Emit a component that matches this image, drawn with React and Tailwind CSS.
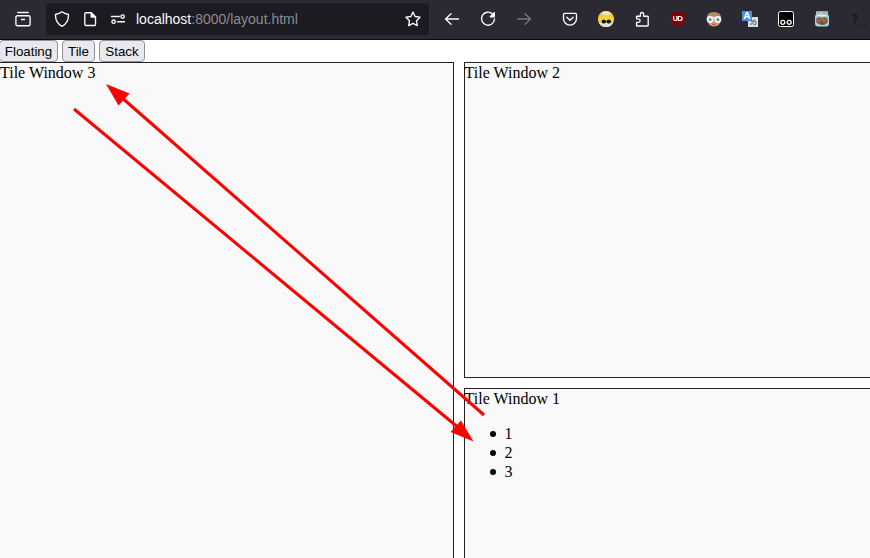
function Icon({ children, className = "", size = 16 }) {
  return (
    <svg
      width={size}
      height={size}
      viewBox="0 0 16 16"
      fill="none"
      stroke="currentColor"
      strokeWidth="1.35"
      strokeLinecap="round"
      strokeLinejoin="round"
      className={`shrink-0 ${className}`}
    >
      {children}
    </svg>
  );
}

function AddressBar() {
  return (
    <div className="ml-[15px] flex h-8 w-[383px] items-center rounded bg-[#1c1b22] pl-2 pr-2">
      <Icon>
        <path d="M8 .8C6 2.3 3.8 3 1.500 3.500c-.2 5 1.700 9.300 6.500 11.800 4.800-2.500 6.700-6.800 6.500-11.800C12.200 3 10 2.300 8 .8Z" />
      </Icon>
      <Icon className="ml-3">
        <path d="M4 1.700h5.300l4.200 4.200v7.400a1.200 1.200 0 0 1-1.200 1.200H4a1.200 1.200 0 0 1-1.200-1.200V2.900A1.200 1.200 0 0 1 4 1.700Z" />
        <path d="M9.200 2v4h4Z" fill="currentColor" />
      </Icon>
      <Icon className="ml-3">
        <path d="M1.500 5.500h7.800M7.500 10.700h7" />
        <circle cx="12.600" cy="5.500" r="1.700" />
        <circle cx="3.600" cy="10.700" r="1.700" />
      </Icon>
      <span className="ml-[10px] font-['Liberation_Sans',sans-serif] text-[14px] leading-5 text-[#8d8c93]">
        <span className="text-[#fbfbfe]">localhost</span>:8000/layout.html
      </span>
      <Icon className="ml-auto">
        <path d="m8 1 2.100 4.500 4.900.7-3.500 3.500.8 4.900L8 12.300l-4.300 2.300.8-4.900L1 6.200l4.900-.7Z" />
      </Icon>
    </div>
  );
}

function Extensions() {
  return (
    <div className="ml-[30px] flex items-center gap-5">
      <Icon>
        <path d="M2.700 2.400h10.600a1.200 1.200 0 0 1 1.200 1.200v4a6.500 6.500 0 0 1-13 0v-4a1.200 1.200 0 0 1 1.200-1.200Z" />
        <path d="m4.800 6.300 3.200 3 3.200-3" />
      </Icon>
      <svg width="16" height="16" viewBox="0 0 16 16">
        <circle cx="8" cy="8" r="8" fill="#f3cf2e" />
        <path d="M3.500 1.500Q8-1.200 12.500 1.500L11 4H5Z" fill="#e8e5de" />
        <path d="M.5 10.500q1.500 5.500 7.500 5.500t7.500-5.500L12 12H4Z" fill="#e6e0d4" />
        <path d="M0 7q8-4 16 0l-1 4-2-2H3l-2 2Z" fill="#f7d52b" />
        <rect x="3" y="8" width="10" height="4" rx="2" fill="#f4e5a0" />
        <ellipse cx="5.800" cy="10.500" rx="2.200" ry="1.900" fill="#080808" />
        <ellipse cx="10.700" cy="10.500" rx="2.300" ry="1.900" fill="#080808" />
      </svg>
      <Icon>
        <path d="M2.600 15v-3.700h1.800a1.700 1.700 0 0 0 0-3.400H2.600V5.200h3.800V3.100a1.600 1.600 0 0 1 3.200 0v2.100h3.800a.8.8 0 0 1 .8.8v8.200a.8.8 0 0 1-.8.8Z" />
      </Icon>
      <svg width="16" height="16" viewBox="0 0 16 16">
        <path
          d="M8 .4Q5 1.900.9 2.100v6.400Q1.200 13 8 15.800q6.800-2.800 7.100-7.300V2.100Q11 1.900 8 .4Z"
          fill="#800000"
          stroke="#611923"
          strokeWidth=".6"
        />
        <path
          d="M3.700 5v3q0 1.500 1.600 1.500T6.900 8V5M8.400 5.500h1.400q2.300 0 2.300 2t-2.300 2H8.400Z"
          fill="none"
          stroke="#fff"
          strokeWidth="1.200"
        />
      </svg>
      <svg width="16" height="16" viewBox="0 0 16 16">
        <circle cx="8" cy="8.500" r="7" fill="#df9b79" />
        <path d="M.8 7Q1 .9 8 1t7.200 6L12 5.800 9 4.600 4 6Z" fill="#b08a60" />
        <path d="M1 7h14" stroke="#d5e5e6" strokeWidth="1.300" />
        <circle cx="4.100" cy="8.500" r="2.500" fill="#5b93a1" stroke="#edf4f2" strokeWidth="1.900" />
        <circle cx="11.900" cy="8.500" r="2.500" fill="#5b93a1" stroke="#edf4f2" strokeWidth="1.900" />
        <path d="M6 13q2 1 4 0" stroke="#b7503e" fill="none" />
      </svg>
      <svg width="16" height="16" viewBox="0 0 16 16">
        <rect x="6" y="6" width="10" height="10" fill="#dce0e2" />
        <path d="M8 13.500q4-1 4.500-5M9 10.500q5-2 5 1t-2.500 2" stroke="#607783" fill="none" strokeWidth="1.200" />
        <rect width="10" height="10" fill="#4b8bf5" />
        <path d="M2.200 8 4.600 1.700h.8L7.800 8M3.300 5.800h3.400" stroke="#fff" fill="none" strokeWidth="1.500" />
      </svg>
      <svg width="16" height="16" viewBox="0 0 16 16">
        <rect x=".5" y=".5" width="15" height="15" rx="2" fill="#000" stroke="#fff" />
        <circle cx="4.800" cy="11.300" r="2" fill="none" stroke="#fff" strokeWidth="1.300" />
        <circle cx="11.200" cy="11.300" r="2" fill="none" stroke="#fff" strokeWidth="1.300" />
      </svg>
      <svg width="16" height="16" viewBox="0 0 16 16">
        <rect x="1" y="3" width="14" height="12.500" rx="3" fill="#a9d4df" />
        <rect x="2" y=".3" width="12" height="3.500" rx="1" fill="#c4cdc9" />
        <path d="M3 2h3M8 2h5" stroke="#809598" />
        <path d="M3 4.500h9" stroke="#e0f0f0" />
        <path d="M2.300 7.500Q5 5 8 7q3-2 5.700.5v4Q11 14.500 8 14t-5.700-2.500Z" fill="#85583b" />
        <circle cx="5.200" cy="9" r="2.300" fill="#a4724f" />
        <circle cx="10.900" cy="9" r="2.300" fill="#a4724f" />
        <path d="M4 8.500h1M6 10h1M10.500 8.500h1M11.500 10.500h1M7.500 12.500h1" stroke="#352920" />
      </svg>
      <span className="w-4 pl-px font-['DejaVu_Sans_Mono',monospace] text-[12px] leading-4 text-[#0c0c0f]">?_</span>
    </div>
  );
}

function LayoutButton({ children, className = "" }) {
  return (
    <button
      className={`h-[22px] shrink-0 rounded-[4px] border border-[#8f8f9d] bg-[#e9e9ed] pt-px font-['Liberation_Sans',sans-serif] text-[13.333px] leading-5 text-black ${className}`}
    >
      {children}
    </button>
  );
}

function Bullet({ children }) {
  return (
    <li className="flex items-center">
      <span className="-ml-[14px] mr-2 mt-px size-1.5 rounded-full bg-black" />
      {children}
    </li>
  );
}

export default function App() {
  return (
    <div className="relative flex h-[558px] w-[870px] flex-col overflow-hidden bg-white font-['Liberation_Serif',serif] text-base leading-[19px] text-black">
      <header className="flex h-10 shrink-0 items-center overflow-hidden border-b border-[#0c0c0d] bg-[#2b2a33] pb-px pl-[15px] text-[#fbfbfe]">
        <Icon>
          <path d="M2.800 1.500h10.400M2.300 4.700h11.400a1.400 1.400 0 0 1 1.400 1.400v7.200a1.400 1.400 0 0 1-1.400 1.400H2.300a1.400 1.400 0 0 1-1.400-1.400V6.100a1.400 1.400 0 0 1 1.400-1.400ZM6.500 8.500h3" />
        </Icon>
        <AddressBar />
        <Icon className="ml-[15px]">
          <path d="M14.500 8h-13M7 2.700 1.500 8 7 13.300" />
        </Icon>
        <Icon className="ml-5">
          <path d="M12.500 3A6.500 6.500 0 1 0 14.500 8" />
          <path d="M14.300 1.700v4h-4Z" fill="currentColor" />
        </Icon>
        <Icon className="ml-5 text-[#77767e]">
          <path d="M1.500 8h13M9 2.700 14.500 8 9 13.300" />
        </Icon>
        <Extensions />
      </header>

      <nav className="flex h-[22px] shrink-0 gap-1">
        <LayoutButton className="-ml-px w-[59px]">Floating</LayoutButton>
        <LayoutButton className="w-[33px]">Tile</LayoutButton>
        <LayoutButton className="w-[46px]">Stack</LayoutButton>
      </nav>

      <main className="flex min-h-0 flex-1 gap-[10px]">
        <section className="w-[454px] shrink-0 border-r border-t border-[#222] bg-[#f9f9f9]">
          Tile Window 3
        </section>
        <div className="flex min-w-0 flex-1 flex-col gap-[10px]">
          <section className="h-[316px] shrink-0 border-y border-l border-[#222] bg-[#f9f9f9]">
            <div className="-ml-[0.4px]">Tile Window 2</div>
          </section>
          <section className="flex-1 border-l border-t border-[#222] bg-[#f9f9f9]">
            <div className="-ml-[0.4px]">Tile Window 1</div>
            <ul className="my-4 pl-[39.4px]">
              <Bullet>1</Bullet>
              <Bullet>2</Bullet>
              <Bullet>3</Bullet>
            </ul>
          </section>
        </div>
      </main>

      <svg className="pointer-events-none absolute inset-0" width="870" height="558" viewBox="0 0 870 558">
        <path d="M484 415 120 96M74 109l386 320" stroke="#f00" strokeWidth="3" fill="none" />
        <path d="m106 84 23.500 9.500-11 12ZM473.500 441.500l-23-9.500L461 420.500Z" fill="#f00" />
      </svg>
    </div>
  );
}
